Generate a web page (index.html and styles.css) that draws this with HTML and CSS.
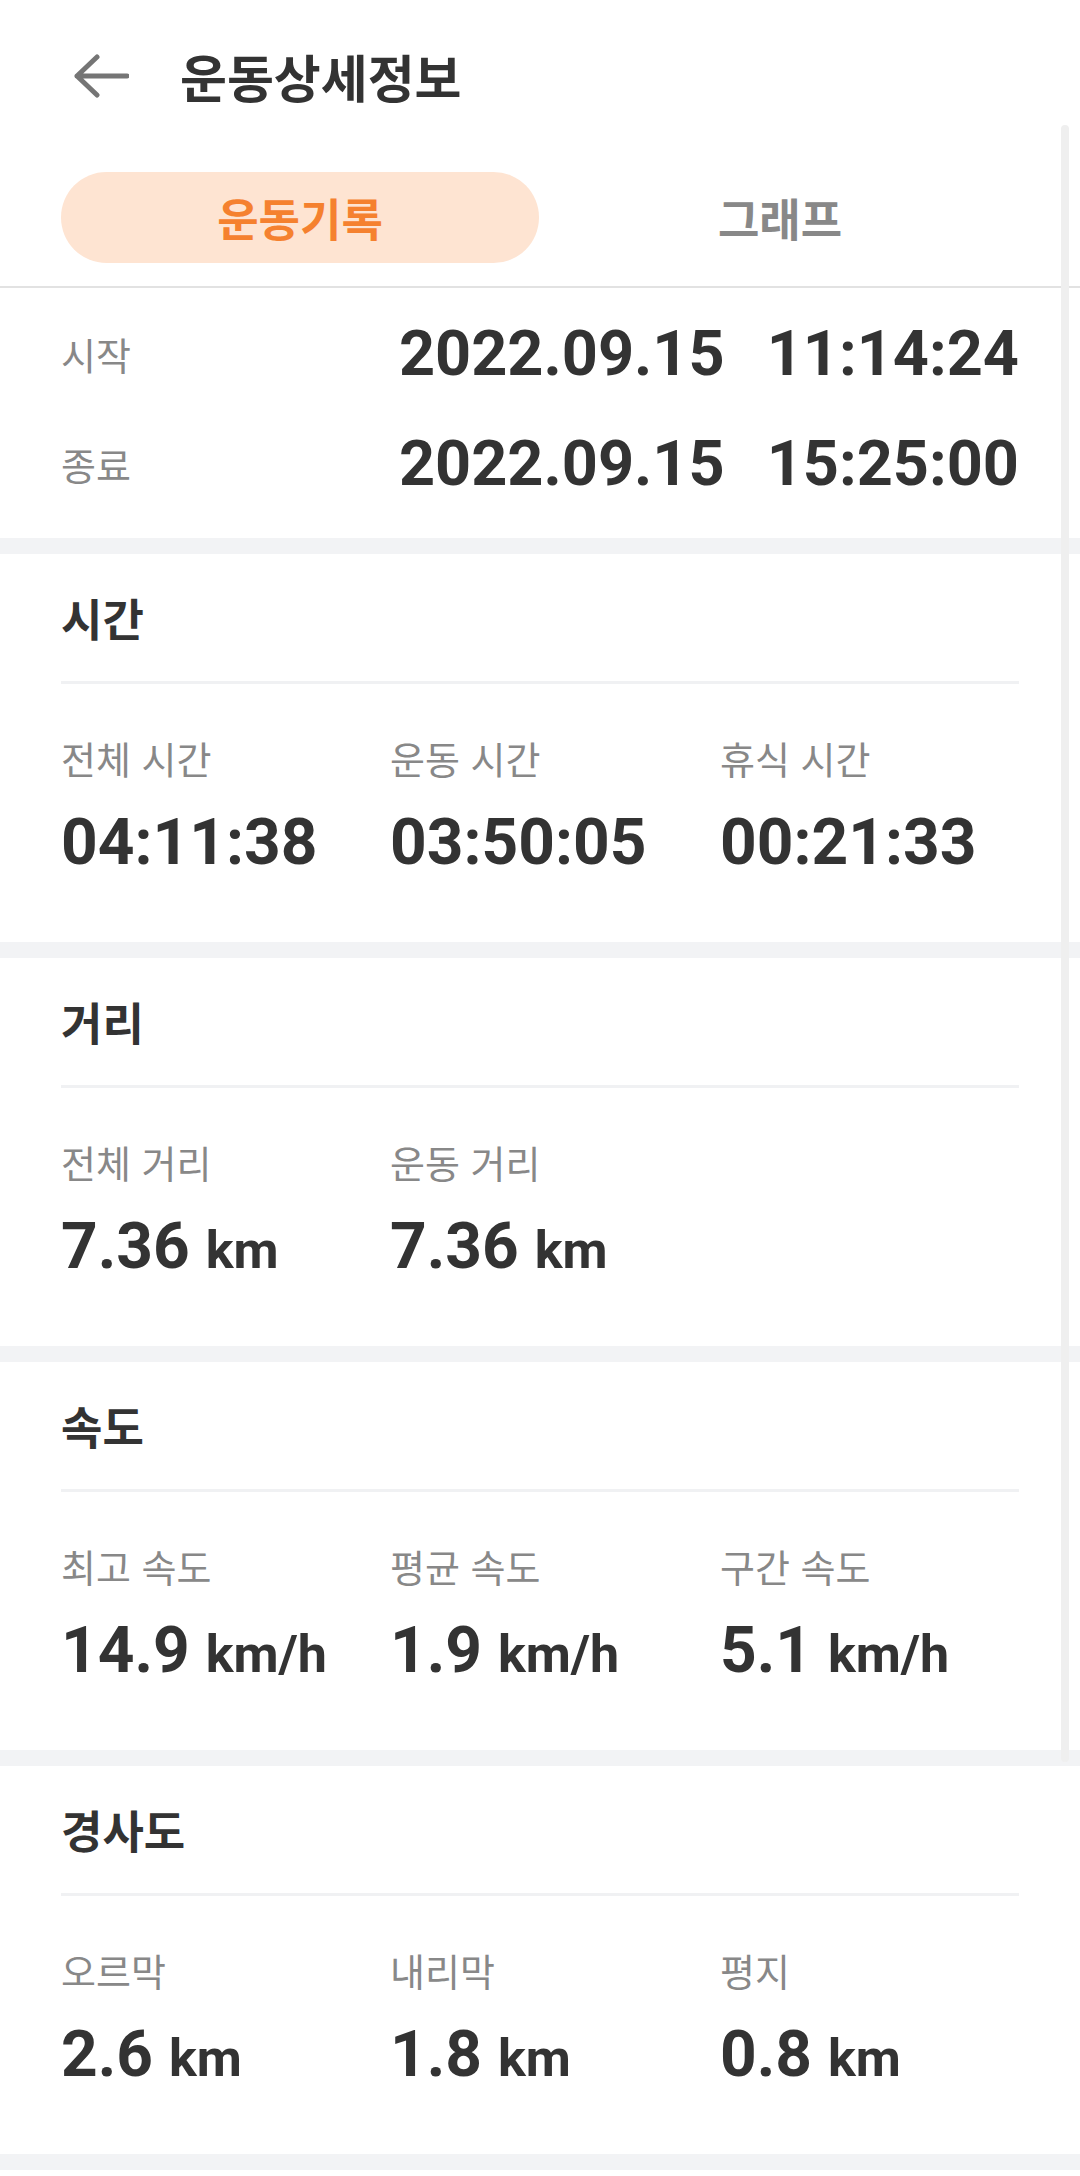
FILE: index.html
```html
<!DOCTYPE html>
<html lang="ko">
<head>
<meta charset="utf-8">
<title>운동상세정보</title>
<link rel="stylesheet" href="styles.css">
</head>
<body>
<div class="page">
  <header class="appbar">
    <svg class="back" width="56" height="44" viewBox="0 0 56 44" aria-hidden="true">
      <path d="M24 3 L4 22 L24 41 M4 22 H54" fill="none" stroke="#757575" stroke-width="5" stroke-linecap="round" stroke-linejoin="round"/>
    </svg>
    <h1 class="title">운동상세정보</h1>
  </header>

  <nav class="tabs">
    <div class="tab active">운동기록</div>
    <div class="tab">그래프</div>
  </nav>

  <main class="content">
    <section class="card period">
      <div class="period-row">
        <span class="period-label">시작</span>
        <span class="period-value"><span>2022.09.15</span><span>11:14:24</span></span>
      </div>
      <div class="period-row">
        <span class="period-label">종료</span>
        <span class="period-value"><span>2022.09.15</span><span>15:25:00</span></span>
      </div>
    </section>

    <section class="card stats">
      <h2 class="stats-title">시간</h2>
      <div class="stats-grid">
        <div class="stat"><div class="stat-label">전체 시간</div><div class="stat-value">04:11:38</div></div>
        <div class="stat"><div class="stat-label">운동 시간</div><div class="stat-value">03:50:05</div></div>
        <div class="stat"><div class="stat-label">휴식 시간</div><div class="stat-value">00:21:33</div></div>
      </div>
    </section>

    <section class="card stats">
      <h2 class="stats-title">거리</h2>
      <div class="stats-grid">
        <div class="stat"><div class="stat-label">전체 거리</div><div class="stat-value">7.36<span class="unit"> km</span></div></div>
        <div class="stat"><div class="stat-label">운동 거리</div><div class="stat-value">7.36<span class="unit"> km</span></div></div>
      </div>
    </section>

    <section class="card stats">
      <h2 class="stats-title">속도</h2>
      <div class="stats-grid">
        <div class="stat"><div class="stat-label">최고 속도</div><div class="stat-value">14.9<span class="unit"> km/h</span></div></div>
        <div class="stat"><div class="stat-label">평균 속도</div><div class="stat-value">1.9<span class="unit"> km/h</span></div></div>
        <div class="stat"><div class="stat-label">구간 속도</div><div class="stat-value">5.1<span class="unit"> km/h</span></div></div>
      </div>
    </section>

    <section class="card stats">
      <h2 class="stats-title">경사도</h2>
      <div class="stats-grid">
        <div class="stat"><div class="stat-label">오르막</div><div class="stat-value">2.6<span class="unit"> km</span></div></div>
        <div class="stat"><div class="stat-label">내리막</div><div class="stat-value">1.8<span class="unit"> km</span></div></div>
        <div class="stat"><div class="stat-label">평지</div><div class="stat-value">0.8<span class="unit"> km</span></div></div>
      </div>
    </section>

    <section class="card tail"></section>
  </main>

  <div class="scrollbar"></div>
</div>
</body>
</html>
```

FILE: styles.css
```css
* { box-sizing: border-box; }

html, body {
  margin: 0;
  padding: 0;
  background: #ffffff;
}

body {
  font-family: "Noto Sans CJK KR", "Noto Sans", sans-serif;
  color: #333333;
}

.page {
  position: relative;
  width: 1080px;
  height: 2176px;
  overflow: hidden;
  background: #ffffff;
}

/* App bar */
.appbar {
  height: 152px;
  display: flex;
  align-items: center;
  padding-left: 73px;
}

.back {
  display: block;
  flex: none;
}

.title {
  margin: 0 0 0 51px;
  font-size: 51px;
  line-height: 64px;
  font-weight: 700;
  color: #333333;
}

/* Tabs */
.tabs {
  display: grid;
  grid-template-columns: 1fr 1fr;
  gap: 2px;
  padding: 20px 61px 23px;
  border-bottom: 2px solid #e2e2e2;
}

.tab {
  height: 91px;
  line-height: 91px;
  border-radius: 46px;
  text-align: center;
  font-size: 45px;
  font-weight: 700;
  color: #888888;
}

.tab.active {
  background: #fee4d2;
  color: #f5812f;
}

/* Content */
.content {
  display: flex;
  flex-direction: column;
  gap: 16px;
  background: #f2f3f5;
}

.card {
  background: #ffffff;
}

/* Period */
.period {
  display: flex;
  flex-direction: column;
  gap: 34px;
  padding: 28px 61px 36px;
}

.period-row {
  display: flex;
  justify-content: space-between;
  align-items: center;
  height: 76px;
}

.period-label {
  font-size: 38px;
  line-height: 50px;
  color: #888888;
}

.period-value {
  display: flex;
  gap: 42px;
  font-family: Roboto, "Noto Sans CJK KR", sans-serif;
  font-weight: 700;
  font-size: 63px;
  line-height: 76px;
  color: #333333;
}

/* Stats */
.stats {
  padding: 0 61px 61px;
}

.stats-title {
  margin: 0;
  padding: 36px 0 35px;
  font-size: 45px;
  line-height: 56px;
  font-weight: 700;
  color: #333333;
  border-bottom: 3px solid #f0f1f3;
}

.stats-grid {
  display: grid;
  grid-template-columns: 329px 330px 1fr;
  margin-top: 49px;
}

.stat-label {
  font-size: 38px;
  line-height: 50px;
  color: #888888;
  white-space: nowrap;
}

.stat-value {
  margin-top: 22px;
  font-family: Roboto, "Noto Sans CJK KR", sans-serif;
  font-weight: 700;
  font-size: 64px;
  line-height: 76px;
  height: 76px;
  color: #333333;
  white-space: nowrap;
}

.unit {
  font-size: 52px;
  line-height: 1;
  margin-left: 3px;
}

.tail {
  height: 200px;
}

/* Scrollbar overlay */
.scrollbar {
  position: absolute;
  top: 125px;
  right: 11px;
  width: 8px;
  height: 1637px;
  background: #efefef;
  border-radius: 4px;
}
```
